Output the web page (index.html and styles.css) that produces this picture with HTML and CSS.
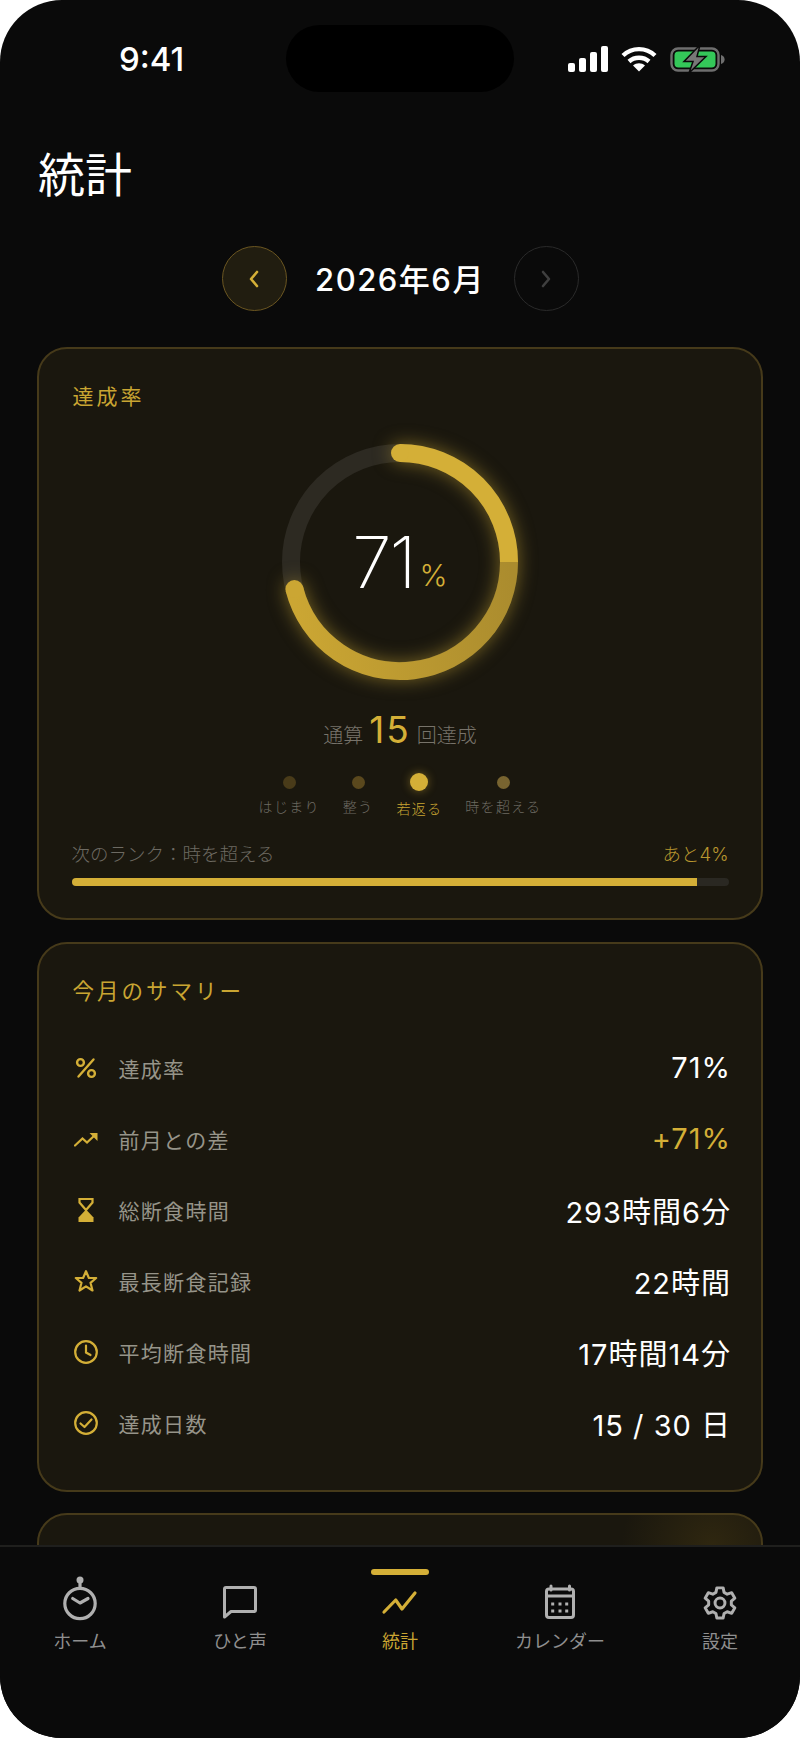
FILE: index.html
```html
<!DOCTYPE html>
<html lang="ja">
<head>
    <meta charset="UTF-8">
    <meta name="viewport" content="width=device-width, initial-scale=1.0">
    <title>統計</title>
    <link rel="stylesheet" href="styles.css">
</head>
<body>
    <div class="phone">
        <div class="island"></div>

        <!-- ステータスバー -->
        <div class="status-bar">
            <span class="status-time">9:41</span>
            <div class="status-icons">
                <svg class="icon-signal" width="40" height="26" viewBox="0 0 40 26" fill="#fff">
                    <rect x="0" y="17" width="7" height="9" rx="2"/>
                    <rect x="11" y="12" width="7" height="14" rx="2"/>
                    <rect x="22" y="6" width="7" height="20" rx="2"/>
                    <rect x="33" y="0" width="7" height="26" rx="2"/>
                </svg>
                <svg class="icon-wifi" width="36" height="26" viewBox="0 0 36 26" fill="none" stroke="#fff" stroke-width="4.4">
                    <path d="M2 9.5C11 1 25 1 34 9.5"/>
                    <path d="M8 15.5C13.5 10.5 22.5 10.5 28 15.5"/>
                    <path d="M18 25.5L12 19.5C15.5 16.6 20.5 16.6 24 19.5Z" fill="#fff" stroke="none"/>
                </svg>
                <svg class="icon-battery" width="56" height="28" viewBox="0 0 56 28">
                    <rect x="1.5" y="3.5" width="47" height="22" rx="6.5" fill="none" stroke="#6e6e6e" stroke-width="2.4"/>
                    <rect x="4.5" y="6.5" width="41" height="16" rx="4" fill="#34c759"/>
                    <path d="M51 10c2.5.6 3.6 2.4 3.6 4.5S53.5 18.4 51 19Z" fill="#6e6e6e"/>
                    <path d="M30 0L14 16.5H23L19 28L36 11.5H27Z" fill="#777" stroke="#0a0a0a" stroke-width="1.5"/>
                </svg>
            </div>
        </div>

        <main class="content">
            <h1 class="page-title">統計</h1>

            <div class="month-nav">
                <button class="nav-btn nav-btn-active">
                    <svg width="24" height="24" viewBox="0 0 24 24" fill="none" stroke="#d4af37" stroke-width="2.6" stroke-linecap="round" stroke-linejoin="round"><path d="M15 5l-6 7 6 7"/></svg>
                </button>
                <span class="month-label">2026年6月</span>
                <button class="nav-btn">
                    <svg width="24" height="24" viewBox="0 0 24 24" fill="none" stroke="#3f3f3f" stroke-width="2.6" stroke-linecap="round" stroke-linejoin="round"><path d="M9 5l6 7-6 7"/></svg>
                </button>
            </div>

            <!-- 達成率 -->
            <section class="card card-rate">
                <h2 class="card-title">達成率</h2>

                <div class="ring">
                    <svg class="ring-svg" width="260" height="260" viewBox="0 0 260 260" fill="none" stroke-width="18">
                        <defs>
                            <linearGradient id="ringLow" gradientUnits="userSpaceOnUse" x1="239" y1="130" x2="24" y2="157">
                                <stop offset="0" stop-color="#ab8c2e"/>
                                <stop offset="1" stop-color="#cba633"/>
                            </linearGradient>
                        </defs>
                        <circle cx="130" cy="130" r="109" stroke="#2d2a22"/>
                        <g class="ring-glow">
                            <path d="M239 130A109 109 0 0 1 24.4 157.1" stroke="url(#ringLow)"/>
                            <path d="M130 21A109 109 0 0 1 239 130" stroke="#d4af37"/>
                            <circle cx="130" cy="21" r="9" fill="#d4af37"/>
                            <circle cx="24.4" cy="157.1" r="9" fill="#cba633"/>
                        </g>
                    </svg>
                    <div class="ring-value"><span class="ring-num">71</span><span class="ring-pct">%</span></div>
                </div>

                <div class="total">通算<strong class="total-num">15</strong>回達成</div>

                <div class="ranks">
                    <div class="rank"><span class="rank-dot rank-dot-1"></span><span class="rank-name">はじまり</span></div>
                    <div class="rank"><span class="rank-dot rank-dot-2"></span><span class="rank-name">整う</span></div>
                    <div class="rank rank-active"><span class="rank-dot"></span><span class="rank-name">若返る</span></div>
                    <div class="rank"><span class="rank-dot rank-dot-4"></span><span class="rank-name">時を超える</span></div>
                </div>

                <div class="next-rank">
                    <span>次のランク：時を超える</span>
                    <span class="next-left">あと4%</span>
                </div>
                <div class="progress"><div class="progress-fill" style="width: 95.2%"></div></div>
            </section>

            <!-- 今月のサマリー -->
            <section class="card card-summary">
                <h2 class="card-title">今月のサマリー</h2>

                <div class="row">
                    <svg class="row-icon" width="24" height="24" viewBox="0 0 24 24" fill="none" stroke="#d4af37" stroke-width="2.4">
                        <circle cx="6.5" cy="6.5" r="3.4"/><circle cx="17.5" cy="17.5" r="3.4"/><path d="M19.5 3.5L4.5 20.5" stroke-linecap="round"/>
                    </svg>
                    <span class="row-label">達成率</span>
                    <span class="row-value">71%</span>
                </div>
                <div class="row">
                    <svg class="row-icon" width="24" height="24" viewBox="0 0 24 24" fill="none" stroke="#d4af37" stroke-width="2.2" stroke-linecap="round">
                        <path d="M1 18.5L8.5 11.5L13 15.5L21 8"/><path d="M15.5 6H23.5V14Z" fill="#d4af37" stroke="none"/>
                    </svg>
                    <span class="row-label">前月との差</span>
                    <span class="row-value row-value-gold">+71%</span>
                </div>
                <div class="row">
                    <svg class="row-icon" width="24" height="24" viewBox="0 0 24 24" fill="none" stroke="#d4af37" stroke-width="2.2">
                        <path d="M5.5 1H18.5V4.5L12 12L5.5 4.5Z"/><path d="M12 11.5L19.5 19.5V24H4.5V19.5Z" fill="#d4af37" stroke="none"/>
                    </svg>
                    <span class="row-label">総断食時間</span>
                    <span class="row-value">293時間6分</span>
                </div>
                <div class="row">
                    <svg class="row-icon" width="24" height="24" viewBox="0 0 24 24" fill="none" stroke="#d4af37" stroke-width="2.2" stroke-linejoin="round">
                        <path d="M12 2.2L14.9 9H22.2L16.5 13.8L18.5 21.5L12 17.3L5.5 21.5L7.5 13.8L1.8 9H9.1Z"/>
                    </svg>
                    <span class="row-label">最長断食記録</span>
                    <span class="row-value">22時間</span>
                </div>
                <div class="row">
                    <svg class="row-icon" width="24" height="24" viewBox="0 0 24 24" fill="none" stroke="#d4af37" stroke-width="2.2" stroke-linecap="round">
                        <circle cx="12" cy="12" r="10.8"/><path d="M12 5.5V12.5L16.5 15"/>
                    </svg>
                    <span class="row-label">平均断食時間</span>
                    <span class="row-value">17時間14分</span>
                </div>
                <div class="row">
                    <svg class="row-icon" width="24" height="24" viewBox="0 0 24 24" fill="none" stroke="#d4af37" stroke-width="2.2" stroke-linecap="round" stroke-linejoin="round">
                        <circle cx="12" cy="12" r="10.8"/><path d="M6.5 12.5L10.5 16L17.5 8.5"/>
                    </svg>
                    <span class="row-label">達成日数</span>
                    <span class="row-value">15 / 30 日</span>
                </div>
            </section>

            <section class="card card-next"></section>
        </main>

        <!-- タブバー -->
        <nav class="tab-bar">
            <div class="tab">
                <svg class="tab-icon" width="40" height="46" viewBox="0 0 40 46" fill="none" stroke="#b0b0b0" stroke-width="3.2" stroke-linecap="round" stroke-linejoin="round">
                    <circle cx="20" cy="26.5" r="15.2"/><circle cx="20" cy="3" r="3.5" fill="#b0b0b0" stroke="none"/><path d="M20 4V11"/><path d="M12.7 21.5L20 26L28 21.5"/>
                </svg>
                <span class="tab-label">ホーム</span>
            </div>
            <div class="tab">
                <svg class="tab-icon" width="40" height="46" viewBox="0 0 40 46" fill="none" stroke="#b0b0b0" stroke-width="3" stroke-linejoin="round">
                    <path d="M4.5 12C4.5 11 5 10.5 6 10.5H34C35 10.5 35.5 11 35.5 12V33C35.5 34 35 34.5 34 34.5H11L4.5 40Z"/>
                </svg>
                <span class="tab-label">ひと声</span>
            </div>
            <div class="tab tab-active">
                <svg class="tab-icon" width="40" height="46" viewBox="0 0 40 46" fill="none" stroke="#d4af37" stroke-width="3.2" stroke-linecap="round" stroke-linejoin="round">
                    <path d="M4 35L15.7 23L22 32L35 16"/>
                </svg>
                <span class="tab-label">統計</span>
            </div>
            <div class="tab">
                <svg class="tab-icon" width="40" height="46" viewBox="0 0 40 46" fill="none" stroke="#b0b0b0" stroke-width="3" stroke-linejoin="round">
                    <rect x="6.5" y="12" width="27" height="28.5" rx="2.5"/>
                    <path d="M6.5 19H33.5M11 9V13M29.5 9V13" stroke-linecap="round"/>
                    <g fill="#b0b0b0" stroke="none">
                        <rect x="11.2" y="25.5" width="3" height="3"/><rect x="18.5" y="25.5" width="3" height="3"/><rect x="25.2" y="25.5" width="3" height="3"/>
                        <rect x="11.2" y="32.5" width="3" height="3"/><rect x="18.5" y="32.5" width="3" height="3"/><rect x="25.2" y="32.5" width="3" height="3"/>
                    </g>
                </svg>
                <span class="tab-label">カレンダー</span>
            </div>
            <div class="tab">
                <svg class="tab-icon" width="40" height="46" viewBox="0 0 40 46" fill="none" stroke="#b0b0b0" stroke-width="3.3" stroke-linejoin="round">
                    <g transform="translate(20 26) scale(.9) translate(-20 -24.3)">
                        <path d="M16.5 7.5H23.5L24.5 12.5L28 14.5L33 12.8L36.5 19L32.6 22.3V26.3L36.5 29.6L33 35.8L28 34L24.5 36L23.5 41H16.5L15.5 36L12 34L7 35.8L3.5 29.6L7.4 26.3V22.3L3.5 19L7 12.8L12 14.5L15.5 12.5Z"/>
                        <circle cx="20" cy="24.3" r="5.5"/>
                    </g>
                </svg>
                <span class="tab-label">設定</span>
            </div>
        </nav>
    </div>
</body>
</html>
```

FILE: styles.css
```css
:root {
    --gold: #d4af37;
    --bg: #0a0a0a;
    --card: #1a170e;
    --card-border: #463a1a;
}

* {
    box-sizing: border-box;
}

body {
    margin: 0;
    background: #fff;
    font-family: 'Inter', 'Noto Sans CJK JP', sans-serif;
    color: #fff;
}

.phone {
    position: relative;
    width: 800px;
    height: 1738px;
    display: flex;
    flex-direction: column;
    background: var(--bg);
    border-radius: 62px;
    overflow: hidden;
}

.island {
    position: absolute;
    top: 25px;
    left: 286px;
    width: 228px;
    height: 67px;
    background: #000;
    border-radius: 34px;
}

.status-bar {
    flex: none;
    height: 118px;
    display: flex;
    justify-content: space-between;
    align-items: flex-start;
    padding: 42px 74px 0 119px;
}

.status-time {
    font-size: 33px;
    font-weight: 500;
    line-height: 34px;
}

.status-icons {
    display: flex;
    align-items: center;
    gap: 13px;
    margin-top: 3px;
}

.content {
    flex: 1;
    min-height: 0;
    overflow: hidden;
    padding: 0 37px;
}

.page-title {
    margin: 30px 0 0 1px;
    font-size: 47px;
    font-weight: 400;
    line-height: 54px;
}

.month-nav {
    display: flex;
    justify-content: center;
    align-items: center;
    margin-top: 44px;
}

.nav-btn {
    width: 65px;
    height: 65px;
    display: flex;
    align-items: center;
    justify-content: center;
    padding: 0;
    background: none;
    border: 1.5px solid #2a2a2a;
    border-radius: 50%;
}

.nav-btn-active {
    background: #211d10;
    border-color: #6b5621;
}

.month-label {
    width: 227px;
    padding-bottom: 3px;
    text-align: center;
    font-size: 31px;
    font-weight: 500;
    letter-spacing: 1.5px;
}

.card {
    margin-top: 36px;
    padding: 36px 32.5px;
    background: var(--card);
    border: 2px solid var(--card-border);
    border-radius: 30px;
}

.card-title {
    margin: 0 0 0 1px;
    font-size: 21px;
    font-weight: 400;
    line-height: 30px;
    letter-spacing: 3px;
    color: #c9a532;
}

/* 達成率カード */
.card-rate {
    height: 573px;
    padding-top: 33px;
}

.ring {
    position: relative;
    width: 260px;
    height: 260px;
    margin: 20px auto 0;
}

.ring-svg {
    overflow: visible;
}

.ring-glow {
    filter: drop-shadow(0 0 9px rgba(212, 175, 55, 0.5));
}

.ring-value {
    position: absolute;
    inset: 0;
    display: flex;
    justify-content: center;
    align-items: center;
}

.ring-num {
    font-size: 71px;
    font-weight: 250;
    letter-spacing: -2px;
}

.ring-pct {
    margin: 26px 0 0 5px;
    font-size: 30px;
    font-weight: 300;
    color: var(--gold);
}

.total {
    display: flex;
    justify-content: center;
    align-items: baseline;
    gap: 6px;
    margin-top: 16px;
    font-size: 20px;
    font-weight: 300;
    color: #77736a;
    line-height: 44px;
}

.total-num {
    font-size: 37px;
    font-weight: 400;
    letter-spacing: 2px;
    color: var(--gold);
}

.ranks {
    display: flex;
    justify-content: center;
    gap: 23px;
    margin-top: 15px;
}

.rank {
    display: flex;
    flex-direction: column;
    align-items: center;
}

.rank-dot {
    width: 18px;
    height: 18px;
    border-radius: 50%;
    background: var(--gold);
    box-shadow: 0 0 10px rgba(212, 175, 55, 0.45);
}

.rank-dot-1, .rank-dot-2, .rank-dot-4 {
    width: 13px;
    height: 13px;
    margin: 2.5px 0 3px;
    box-shadow: none;
}

.rank-dot-1 { background: #493b19; }
.rank-dot-2 { background: #5a481d; }
.rank-dot-4 { background: #786430; }

.rank-name {
    margin-top: 4px;
    font-size: 14px;
    font-weight: 300;
    line-height: 22px;
    letter-spacing: 1.3px;
    color: #6d6a62;
}

.rank-active .rank-name {
    margin-top: 7px;
    color: #c9a532;
}

.next-rank {
    display: flex;
    justify-content: space-between;
    align-items: center;
    margin-top: 21px;
    font-size: 18.5px;
    font-weight: 300;
    line-height: 26px;
    color: #6d6a62;
}

.next-left {
    color: #b8962f;
}

.progress {
    height: 8px;
    margin-top: 11px;
    background: #2a2822;
    border-radius: 4px;
    overflow: hidden;
}

.progress-fill {
    height: 100%;
    background: var(--gold);
}

/* サマリー */
.card-summary {
    height: 550px;
    margin-top: 22px;
    padding-top: 32px;
}

.card-summary .card-title {
    margin-bottom: 26px;
    font-size: 21.5px;
}

.row {
    display: flex;
    align-items: center;
    height: 71px;
    margin-left: 2px;
}

.row-icon {
    flex: none;
    margin-right: 21px;
}

.row-label {
    flex: 1;
    font-size: 21px;
    font-weight: 400;
    letter-spacing: 1.3px;
    color: #969489;
}

.row-value {
    margin-right: -2.5px;
    font-size: 29px;
    font-weight: 400;
    letter-spacing: 1px;
}

.row-value-gold {
    color: var(--gold);
}

.card-next {
    height: 200px;
    margin-top: 21px;
    background: radial-gradient(circle at 673px 31px, #2f2710, var(--card) 90px);
}

/* タブバー */
.tab-bar {
    flex: none;
    height: 193px;
    display: grid;
    grid-template-columns: repeat(5, 1fr);
    padding-top: 22px;
    background: var(--bg);
    border-top: 2px solid #1f1f1d;
}

.tab {
    position: relative;
    display: flex;
    flex-direction: column;
    align-items: center;
}

.tab-active::before {
    content: "";
    position: absolute;
    top: 0;
    width: 58px;
    height: 6px;
    border-radius: 3px;
    background: var(--gold);
}

.tab-icon {
    margin-top: 8px;
    overflow: visible;
}

.tab-label {
    margin-top: 6px;
    font-size: 18px;
    font-weight: 400;
    line-height: 26px;
    color: #8f8f8f;
}

.tab-active .tab-label {
    color: #c9a532;
}
```
